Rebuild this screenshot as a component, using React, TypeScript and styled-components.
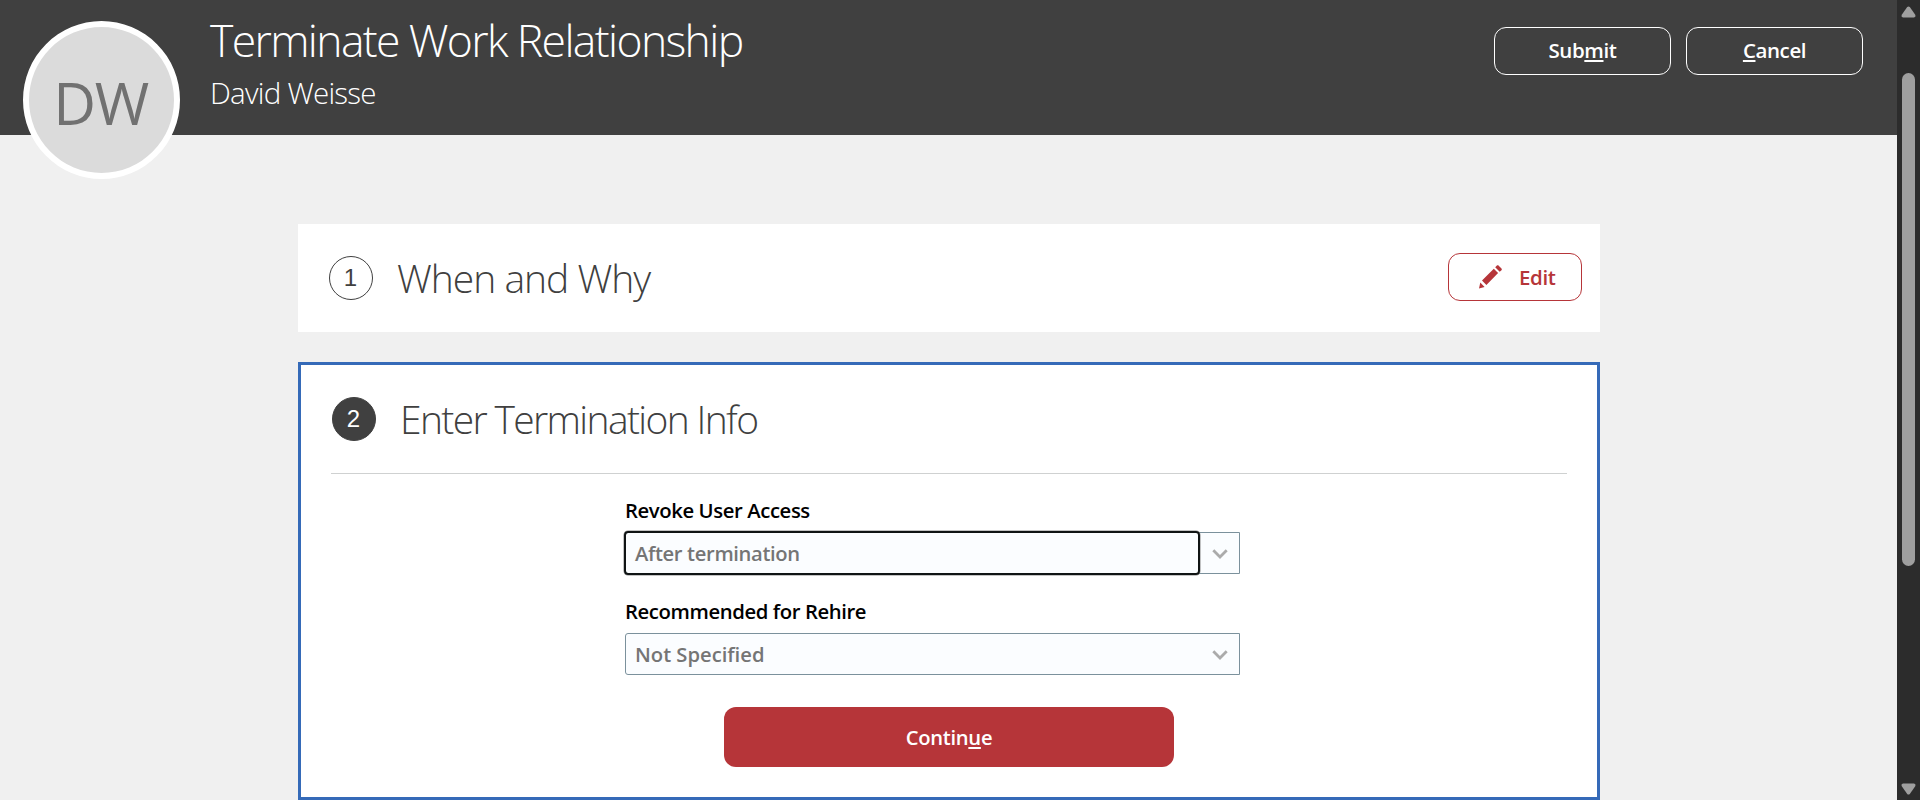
import React from "react";
import styled, { createGlobalStyle, css } from "styled-components";

const GlobalStyle = createGlobalStyle`
  * { box-sizing: border-box; }
  body { margin: 0; overflow: hidden; background: #f0f0f0; font-family: "Segoe UI", "Open Sans", "Noto Sans", sans-serif; }
  button { font-family: inherit; padding: 0; cursor: pointer; }
`;

const Shell = styled.div`
  display: flex;
  width: 1920px;
  height: 800px;
`;

const Page = styled.div`
  width: 1897px;
  height: 800px;
  background: #f0f0f0;
`;

const Header = styled.header`
  display: flex;
  align-items: flex-start;
  height: 135px;
  padding: 0 34px 0 23px;
  background: #404040;
  color: #fff;
`;

const Avatar = styled.div`
  flex: none;
  width: 157px;
  height: 158px;
  margin-top: 21px;
  padding-right: 2px;
  border: 6px solid #fff;
  border-radius: 50%;
  background: #dbdbdb;
  color: #717171;
  font-size: 59px;
  line-height: 150px;
  letter-spacing: -1.5px;
  text-align: center;
`;

const Titles = styled.div`
  flex: 1;
  margin: 9px 0 0 30px;
`;

const Title = styled.h1`
  margin: 0;
  font-size: 44.5px;
  font-weight: 300;
  line-height: 61px;
  letter-spacing: -1.64px;
  white-space: nowrap;
`;

const Person = styled.div`
  margin-top: 3px;
  font-size: 29.5px;
  font-weight: 300;
  line-height: 39px;
  letter-spacing: -0.75px;
`;

const Actions = styled.div`
  display: flex;
  gap: 15px;
  margin-top: 27px;
`;

const HeaderButton = styled.button`
  width: 177px;
  height: 48px;
  padding-bottom: 2px;
  border: 1px solid #fff;
  border-radius: 12px;
  background: transparent;
  color: #fff;
  font-size: 20.5px;
  font-weight: 600;
  line-height: 44px;
  letter-spacing: -0.4px;
`;

const AccessKey = styled.span`
  text-decoration: underline;
  text-decoration-thickness: 2px;
  text-underline-offset: 2px;
  text-decoration-skip-ink: none;
`;

const Steps = styled.main`
  display: flex;
  flex-direction: column;
  gap: 30px;
  width: 1302px;
  margin: 89px 0 0 298px;
`;

const Card = styled.section<{ $active?: boolean }>`
  background: #fff;
  ${(p) =>
    p.$active
      ? css`height: 438px; border: 3px solid #356ab8; padding: 0 30px;`
      : css`height: 108px; padding: 0 18px 0 30px;`}
`;

const StepHead = styled.div<{ $ruled?: boolean }>`
  display: flex;
  align-items: center;
  height: 108px;
  ${(p) => p.$ruled && css`height: 109px; border-bottom: 1px solid #cfd1d1;`}
`;

const StepNumber = styled.div<{ $filled?: boolean }>`
  width: 44px;
  height: 44px;
  margin: 0 24.5px 0 0.5px;
  border: 1.5px solid #404040;
  border-radius: 50%;
  background: ${(p) => (p.$filled ? "#404040" : "#fff")};
  color: ${(p) => (p.$filled ? "#fff" : "#404040")};
  font: 24px/41px "Liberation Sans", sans-serif;
  text-align: center;
`;

const StepTitle = styled.h2<{ $tracking: number }>`
  flex: 1;
  margin: 0;
  color: #404040;
  font-size: 39px;
  font-weight: 300;
  line-height: 52px;
  letter-spacing: ${(p) => p.$tracking}px;
`;

const EditButton = styled.button`
  display: flex;
  align-items: center;
  width: 134px;
  height: 48px;
  margin-bottom: 2px;
  padding-left: 29px;
  border: 1px solid #b63539;
  border-radius: 12px;
  background: #fff;
  color: #b63539;
  font-size: 20.5px;
  font-weight: 600;
  letter-spacing: -0.4px;
  svg { margin-right: 17px; }
`;

const Form = styled.div`
  display: flex;
  flex-direction: column;
  width: 615px;
  margin: 21px 0 0 294px;
`;

const Label = styled.label`
  height: 37px;
  color: #000;
  font-size: 20.3px;
  font-weight: 600;
  line-height: 30px;
  letter-spacing: -0.4px;
  white-space: nowrap;
`;

const Select = styled.div`
  display: flex;
  height: 42px;
  margin-bottom: 22px;
  border: 1px solid #7b919c;
  border-radius: 3px 0 0 3px;
  background: #fbfdff;
`;

const Value = styled.div<{ $focused?: boolean }>`
  flex: 1;
  padding-left: 9px;
  color: #757575;
  font-size: 20.2px;
  font-weight: 600;
  line-height: 41px;
  ${(p) =>
    p.$focused &&
    css`
      margin: -2px 0 -2px -2px;
      border: 2px solid #101414;
      border-radius: 4px;
      box-shadow: 0 0 0 0.5px #888;
      letter-spacing: -0.35px;
    `}
`;

const Arrow = styled.div`
  display: flex;
  align-items: center;
  justify-content: center;
  width: 39px;
  padding-top: 2px;
`;

const ContinueButton = styled.button`
  display: block;
  width: 450px;
  height: 60px;
  margin: 10px 0 0 99px;
  border: 0;
  border-radius: 12px;
  background: #b63539;
  color: #fff;
  font-size: 20.2px;
  font-weight: 600;
  letter-spacing: -0.3px;
`;

const Scrollbar = styled.div`
  display: flex;
  flex-direction: column;
  align-items: center;
  width: 23px;
  background: #2c2c2c;
`;

const Thumb = styled.div`
  width: 13px;
  height: 493px;
  margin-bottom: 217px;
  border-radius: 7px;
  background: #9f9f9f;
`;

const UpArrow = styled.svg`
  margin: 6px 0 55px;
`;

const Pencil = () => (
  <svg width="24" height="24" viewBox="0 0 24 24" fill="#b63539">
    <path d="M1 23.6 2.3 17.6 6.6 21.9ZM4 15.4 15.8 3.7 20.1 8 8.4 19.9ZM17.2 2.3 18.9.6C19.4.1 20 .1 20.5.6L23.5 3.6C24 4.1 24 4.7 23.5 5.2L21.7 6.8Z" />
  </svg>
);

const Chevron = () => (
  <svg width="16" height="10" viewBox="0 0 16 10" fill="none" stroke="#ababab" strokeWidth="2.8">
    <path d="M1.3 1.3 8 8 14.7 1.3" />
  </svg>
);

function SelectField({ label, value, focused }: { label: string; value: string; focused?: boolean }) {
  return (
    <>
      <Label>{label}</Label>
      <Select>
        <Value $focused={focused}>{value}</Value>
        <Arrow><Chevron /></Arrow>
      </Select>
    </>
  );
}

export default function App() {
  return (
    <Shell>
      <GlobalStyle />
      <Page>
        <Header>
          <Avatar>DW</Avatar>
          <Titles>
            <Title>Terminate Work Relationship</Title>
            <Person>David Weisse</Person>
          </Titles>
          <Actions>
            <HeaderButton>Sub<AccessKey>m</AccessKey>it</HeaderButton>
            <HeaderButton><AccessKey>C</AccessKey>ancel</HeaderButton>
          </Actions>
        </Header>
        <Steps>
          <Card>
            <StepHead>
              <StepNumber>1</StepNumber>
              <StepTitle $tracking={-1}>When and Why</StepTitle>
              <EditButton><Pencil />Edit</EditButton>
            </StepHead>
          </Card>
          <Card $active>
            <StepHead $ruled>
              <StepNumber $filled>2</StepNumber>
              <StepTitle $tracking={-1.65}>Enter Termination Info</StepTitle>
            </StepHead>
            <Form>
              <SelectField label="Revoke User Access" value="After termination" focused />
              <SelectField label="Recommended for Rehire" value="Not Specified" />
              <ContinueButton>Contin<AccessKey>u</AccessKey>e</ContinueButton>
            </Form>
          </Card>
        </Steps>
      </Page>
      <Scrollbar>
        <UpArrow width="15" height="12" viewBox="0 0 15 12" fill="#9f9f9f">
          <path d="M6.2 1Q7.5 0 8.8 1L14.4 9Q15 11.3 13 11.5H2Q0 11.3.6 9Z" />
        </UpArrow>
        <Thumb />
        <svg width="15" height="12" viewBox="0 0 15 12" fill="#9f9f9f">
          <path d="M6.2 11Q7.5 12 8.8 11L14.4 3Q15 .7 13 .5H2Q0 .7.6 3Z" />
        </svg>
      </Scrollbar>
    </Shell>
  );
}
